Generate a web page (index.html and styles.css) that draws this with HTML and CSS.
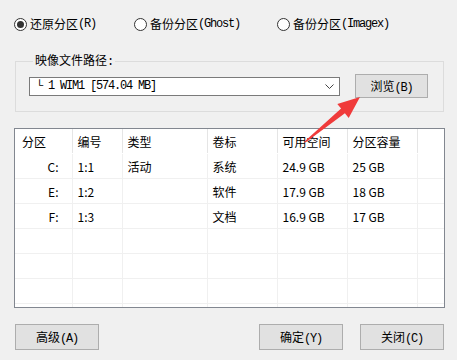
FILE: index.html
```html
<!DOCTYPE html>
<html lang="zh-CN">
  <head>
    <meta charset="UTF-8" />
    <title>还原分区</title>
    <link rel="stylesheet" href="styles.css">
  </head>
  <body>
    <div class="dialog">
      <div class="modes">
        <label class="radio mode-restore"><span class="dot checked"></span>还原分区<span class="lat">(R)</span></label>
        <label class="radio mode-ghost"><span class="dot"></span>备份分区<span class="lat">(Ghost)</span></label>
        <label class="radio"><span class="dot"></span>备份分区<span class="lat">(Imagex)</span></label>
      </div>

      <fieldset class="group">
        <legend>映像文件路径<span class="lat">:</span></legend>
        <div class="path-row">
          <div class="combo">
            <span class="lat">└ 1 WIM1 [574.04 MB]</span>
            <svg class="chevron" width="9" height="5" viewBox="0 0 9 5"><path d="M0.5 0.5 L4.5 4.5 L8.5 0.5" fill="none" stroke="#444" stroke-width="1"/></svg>
          </div>
          <button class="btn browse">浏览<span class="lat">(B)</span></button>
        </div>
      </fieldset>

      <div class="list">
        <table>
          <colgroup>
            <col style="width:57px"><col style="width:50px"><col style="width:85px">
            <col style="width:70px"><col style="width:70px"><col style="width:70px"><col>
          </colgroup>
          <thead>
            <tr><th class="c1">分区</th><th>编号</th><th>类型</th><th>卷标</th><th>可用空间</th><th>分区容量</th><th class="last"></th></tr>
          </thead>
          <tbody>
            <tr><td class="drive">C:</td><td>1:1</td><td>活动</td><td>系统</td><td>24.9 GB</td><td>25 GB</td><td></td></tr>
            <tr><td class="drive">E:</td><td>1:2</td><td></td><td>软件</td><td>17.9 GB</td><td>18 GB</td><td></td></tr>
            <tr><td class="drive">F:</td><td>1:3</td><td></td><td>文档</td><td>16.9 GB</td><td>17 GB</td><td></td></tr>
            <tr><td></td><td></td><td></td><td></td><td></td><td></td><td></td></tr>
            <tr><td></td><td></td><td></td><td></td><td></td><td></td><td></td></tr>
            <tr><td></td><td></td><td></td><td></td><td></td><td></td><td></td></tr>
            <tr><td></td><td></td><td></td><td></td><td></td><td></td><td></td></tr>
          </tbody>
        </table>
      </div>

      <div class="actions">
        <button class="btn wide">高级<span class="lat">(A)</span></button>
        <div class="spacer"></div>
        <button class="btn wide">确定<span class="lat">(Y)</span></button>
        <button class="btn wide">关闭<span class="lat">(C)</span></button>
      </div>
    </div>

    <!-- 红色提示箭头 -->
    <svg class="arrow" width="457" height="360" viewBox="0 0 457 360">
      <polygon points="304.5,141.5 341.1,108.6 337.3,103.9 360,97 348.7,117.9 344.9,113.2 305.5,142.5" fill="#f03b3b"/>
    </svg>
  </body>
</html>
```

FILE: styles.css
```css
html, body {
  margin: 0;
  padding: 0;
}

body {
  width: 457px;
  height: 360px;
  background: #f0f0f0;
  font-family: "Noto Sans CJK SC", sans-serif;
  font-size: 12px;
  color: #000;
  overflow: hidden;
  position: relative;
}

.lat {
  font-family: "Liberation Mono", monospace;
  font-size: 12px;
  letter-spacing: -1.2px;
}

.dialog {
  padding: 17px 13px 0 14px;
}

.modes {
  display: flex;
  height: 14px;
  align-items: center;
}

.radio {
  display: flex;
  align-items: center;
  line-height: 14px;
  white-space: nowrap;
}

.mode-restore {
  width: 120px;
}

.mode-ghost {
  width: 143px;
}

.dot {
  width: 11px;
  height: 11px;
  border: 1px solid #333;
  border-radius: 50%;
  background: #fff;
  margin-right: 3px;
  display: flex;
  align-items: center;
  justify-content: center;
}

.dot.checked::after {
  content: "";
  width: 7px;
  height: 7px;
  border-radius: 50%;
  background: #333;
}

.group {
  margin: 22px 0 0 1px;
  padding: 5px 15px 13px 13px;
  border: 1px solid #dcdcdc;
  width: 399px;
}

.group legend {
  padding: 0 2px;
  margin-left: 4px;
  line-height: 14px;
}

.path-row {
  display: flex;
  align-items: center;
}

.combo {
  width: 303px;
  height: 17px;
  border: 1px solid #7a7a7a;
  background: #fff;
  padding: 0 0 0 6px;
  display: flex;
  align-items: center;
  justify-content: space-between;
}

.chevron {
  margin-right: 5px;
}

.btn {
  font-family: "Noto Sans CJK SC", sans-serif;
  font-size: 12px;
  background: #e1e1e1;
  border: 1px solid #adadad;
  padding: 0;
  margin: 0;
  color: #000;
}

.browse {
  width: 73px;
  height: 24px;
  margin-left: 15px;
}

.list {
  margin-top: 16px;
  width: 429px;
  height: 178px;
  border: 1px solid #828790;
  background: #fff;
  overflow: hidden;
}

.list table {
  border-collapse: collapse;
  table-layout: fixed;
  width: 429px;
}

.list th {
  height: 24px;
  font-weight: normal;
  text-align: left;
  padding: 0 0 0 5px;
  border-right: 1px solid #e5e5e5;
  border-bottom: 1px solid #fff;
}

.list th.c1 {
  padding-left: 7px;
}

.list th.last {
  border-right: none;
}

.list td {
  height: 24px;
  padding: 0 0 0 5px;
  border-right: 1px solid #f0f0f0;
  border-bottom: 1px solid #f0f0f0;
  white-space: nowrap;
}

.list td:last-child {
  border-right: none;
}

.list td.drive {
  text-align: right;
  padding: 0 13px 0 0;
}

.actions {
  display: flex;
  margin-top: 16px;
  padding-left: 1px;
  width: 429px;
}

.wide {
  width: 84px;
  height: 26px;
}

.spacer {
  flex: 1;
}

.actions .wide + .wide {
  margin-left: 17px;
}

.arrow {
  position: absolute;
  left: 0;
  top: 0;
  pointer-events: none;
}
```
